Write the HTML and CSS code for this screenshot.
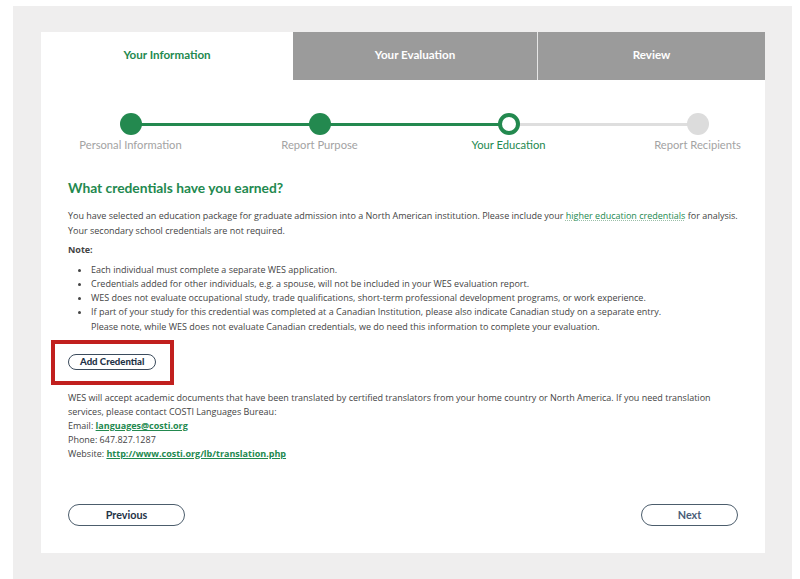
FILE: index.html
```html
<!DOCTYPE html>
<html lang="en">
<head>
  <meta charset="UTF-8">
  <meta name="viewport" content="width=device-width, initial-scale=1.0">
  <title>Your Education</title>
  <link rel="stylesheet" href="styles.css">
</head>
<body>
  <div class="page">
    <div class="card">
      <div class="tabs">
        <div class="tab tab-active">Your Information</div>
        <div class="tab">Your Evaluation</div>
        <div class="tab tab-last">Review</div>
      </div>

      <div class="stepper">
        <div class="step done">
          <span class="dot"></span>
          <span class="step-label">Personal Information</span>
        </div>
        <div class="step done">
          <span class="dot"></span>
          <span class="step-label">Report Purpose</span>
        </div>
        <div class="step current">
          <span class="dot"></span>
          <span class="step-label">Your Education</span>
        </div>
        <div class="step">
          <span class="dot"></span>
          <span class="step-label">Report Recipients</span>
        </div>
      </div>

      <div class="content">
        <h2>What credentials have you earned?</h2>
        <p class="intro">You have selected an education package for graduate admission into a North American institution. Please include your <a href="#" class="hint">higher education credentials</a> for analysis.<br>Your secondary school credentials are not required.</p>

        <p class="note">Note:</p>
        <ul class="notes">
          <li>Each individual must complete a separate WES application.</li>
          <li>Credentials added for other individuals, e.g. a spouse, will not be included in your WES evaluation report.</li>
          <li>WES does not evaluate occupational study, trade qualifications, short-term professional development programs, or work experience.</li>
          <li>If part of your study for this credential was completed at a Canadian Institution, please also indicate Canadian study on a separate entry.<br>Please note, while WES does not evaluate Canadian credentials, we do need this information to complete your evaluation.</li>
        </ul>

        <div class="highlight">
          <button class="btn-small">Add Credential</button>
        </div>

        <p class="contact">
          WES will accept academic documents that have been translated by certified translators from your home country or North America. If you need translation<br>services, please contact COSTI Languages Bureau:<br>
          Email: <a href="#">languages@costi.org</a><br>
          Phone: 647.827.1287<br>
          Website: <a href="#">http://www.costi.org/lb/translation.php</a>
        </p>

        <div class="actions">
          <button class="btn btn-prev">Previous</button>
          <button class="btn btn-next">Next</button>
        </div>
      </div>
    </div>
  </div>
</body>
</html>
```

FILE: styles.css
```css
body {
  margin: 0;
  background-color: #fff;
  font-family: "Open Sans", Arial, sans-serif;
  color: #444;
}

.page {
  margin: 6px 8px 0 13px;
  padding: 26px 27px 30px 28px;
  background-color: #efeeee;
}

.card {
  background-color: #fff;
}

/* tabs */
.tabs {
  display: grid;
  grid-template-columns: 252px 244px 1fr;
  height: 48px;
}

.tab {
  display: flex;
  justify-content: center;
  align-items: center;
  padding-bottom: 3px;
  background-color: #9b9b9b;
  color: #fff;
  font-family: Lato, Arial, sans-serif;
  font-weight: bold;
  font-size: 11.6px;
}

.tab-active {
  background-color: #fff;
  color: #23894f;
}

.tab-last {
  border-left: 1px solid #e6e6e6;
}

/* stepper */
.stepper {
  display: grid;
  grid-template-columns: repeat(4, 189px);
  margin-left: -5px;
  padding-top: 33px;
}

.step {
  position: relative;
  display: flex;
  flex-direction: column;
  align-items: center;
}

.step + .step::before {
  content: "";
  position: absolute;
  top: 10px;
  left: -50%;
  right: 50%;
  height: 3px;
  background-color: #dedede;
}

.step.done + .step::before {
  background-color: #23894f;
}

.dot {
  position: relative;
  z-index: 1;
  width: 22px;
  height: 22px;
  border-radius: 50%;
  background-color: #dcdcdc;
  box-sizing: border-box;
}

.step.done .dot {
  background-color: #23894f;
}

.step.current .dot {
  background-color: #fff;
  border: 4px solid #23894f;
}

.step-label {
  margin-top: 3px;
  font-family: Lato, Arial, sans-serif;
  font-size: 11.2px;
  color: #a3a3a3;
  line-height: 14px;
}

.step.current .step-label {
  color: #23894f;
}

/* content */
.content {
  padding: 26px 27px 27px 27px;
}

h2 {
  margin: 0 0 11px;
  font-family: Lato, Arial, sans-serif;
  font-size: 13.8px;
  color: #23894f;
  line-height: 20px;
}

p {
  margin: 0;
  font-size: 9px;
  line-height: 14.5px;
}

a {
  color: #23894f;
}

a.hint {
  text-decoration: underline dotted #9bbfa8;
}

.intro {
  margin-bottom: 5px;
}

.note {
  font-weight: bold;
  margin-bottom: 5px;
}

.notes {
  margin: 0;
  padding-left: 23px;
  font-size: 9px;
  line-height: 14.3px;
}

.highlight {
  display: inline-block;
  margin: 6px 0 0 -17px;
  padding: 10px 14px 11px 13px;
  border: 4px solid #c1201e;
}

.btn-small {
  display: block;
  height: 16px;
  padding: 0 11px;
  border: 1px solid #3b4b5c;
  border-radius: 8px;
  background-color: #fff;
  color: #1f3347;
  font-family: Lato, Arial, sans-serif;
  font-weight: 900;
  font-size: 9.6px;
}

.contact {
  margin-top: 6px;
  line-height: 14px;
}

.contact a {
  font-weight: bold;
}

.actions {
  display: flex;
  justify-content: space-between;
  margin-top: 43px;
}

.btn {
  height: 22px;
  border: 1px solid #4c5d6c;
  border-radius: 11px;
  background-color: #fff;
  font-family: Lato, Arial, sans-serif;
  font-weight: bold;
  font-size: 10.8px;
}

.btn-prev {
  width: 117px;
  color: #1f3347;
}

.btn-next {
  width: 97px;
  color: #4a5d78;
}
```
